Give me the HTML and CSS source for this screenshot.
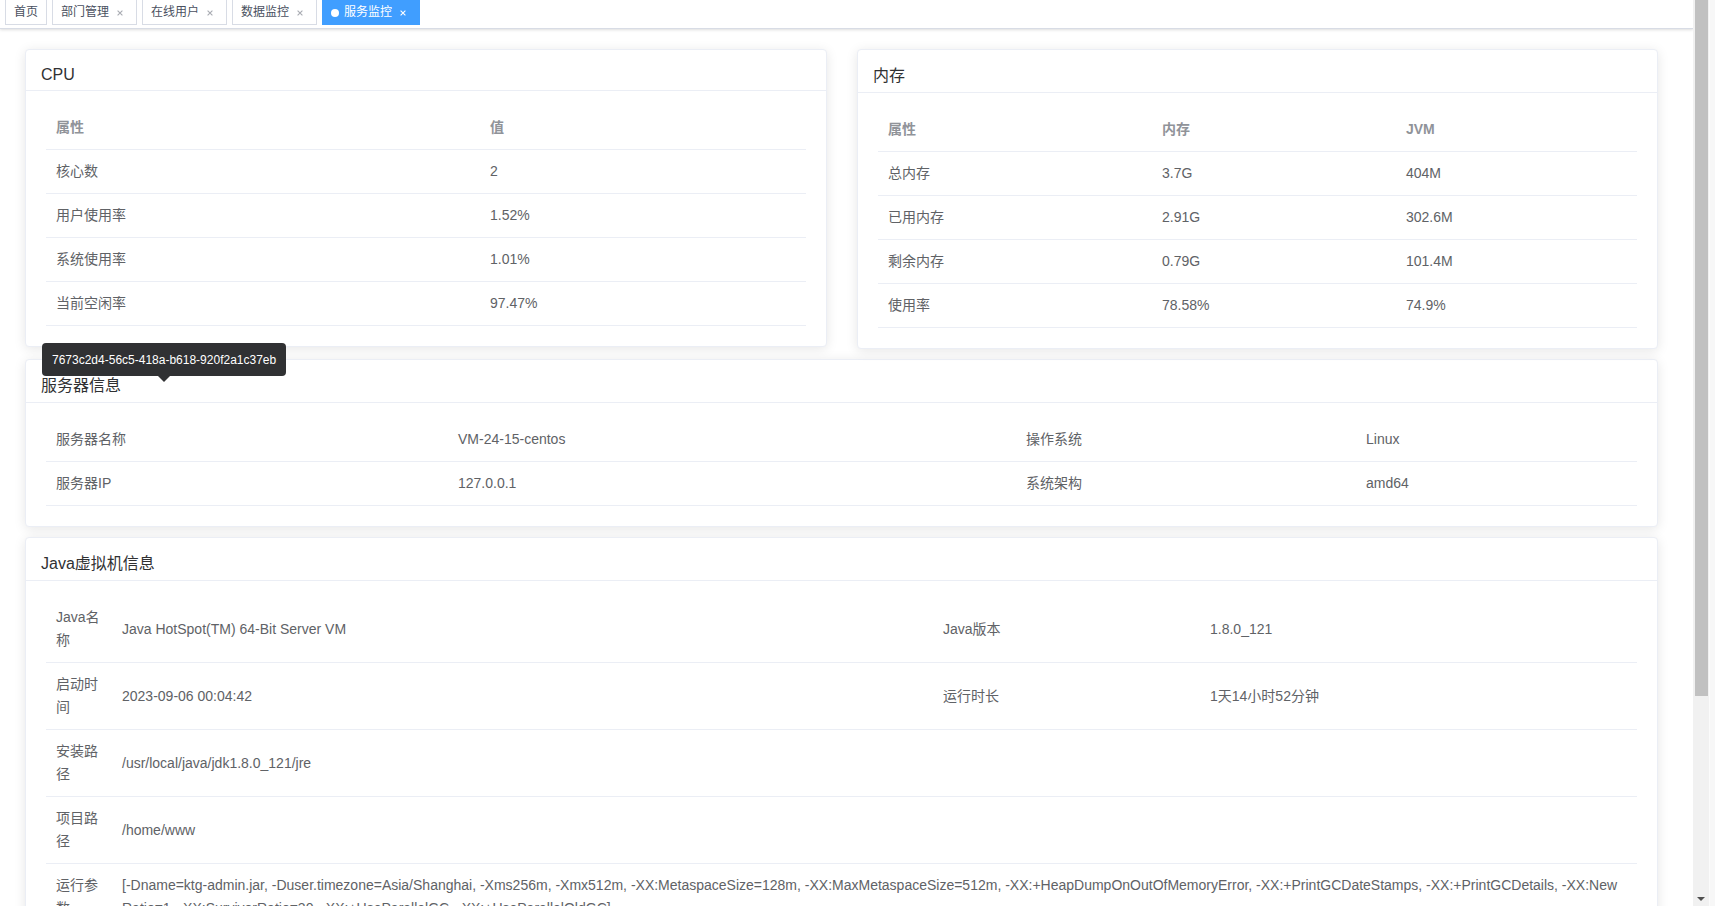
FILE: index.html
```html
<!DOCTYPE html>
<html lang="zh-CN">
<head>
<meta charset="utf-8">
<title>服务监控</title>
<link rel="stylesheet" href="styles.css">
</head>
<body>
<div class="window">
  <div class="page">
    <div class="tags-bar">
      <span class="tag">首页</span>
      <span class="tag">部门管理<i class="close"><svg viewBox="0 0 16 16" width="16" height="16"><path d="M5.6 5.6L10.4 10.4M10.4 5.6L5.6 10.4"/></svg></i></span>
      <span class="tag">在线用户<i class="close"><svg viewBox="0 0 16 16" width="16" height="16"><path d="M5.6 5.6L10.4 10.4M10.4 5.6L5.6 10.4"/></svg></i></span>
      <span class="tag">数据监控<i class="close"><svg viewBox="0 0 16 16" width="16" height="16"><path d="M5.6 5.6L10.4 10.4M10.4 5.6L5.6 10.4"/></svg></i></span>
      <span class="tag active"><i class="dot"></i>服务监控<i class="close"><svg viewBox="0 0 16 16" width="16" height="16"><path d="M5.6 5.6L10.4 10.4M10.4 5.6L5.6 10.4"/></svg></i></span>
    </div>

    <div class="content">
      <div class="row-2">
        <div class="card">
          <div class="card-header latin">CPU</div>
          <div class="card-body">
            <table class="tbl">
              <colgroup><col class="w434"><col class="w326"></colgroup>
              <thead><tr><th>属性</th><th>值</th></tr></thead>
              <tbody>
                <tr><td>核心数</td><td>2</td></tr>
                <tr><td>用户使用率</td><td>1.52%</td></tr>
                <tr><td>系统使用率</td><td>1.01%</td></tr>
                <tr><td>当前空闲率</td><td>97.47%</td></tr>
              </tbody>
            </table>
          </div>
        </div>
        <div class="card">
          <div class="card-header">内存</div>
          <div class="card-body">
            <table class="tbl">
              <colgroup><col class="w274"><col class="w244"><col class="w241"></colgroup>
              <thead><tr><th>属性</th><th>内存</th><th>JVM</th></tr></thead>
              <tbody>
                <tr><td>总内存</td><td>3.7G</td><td>404M</td></tr>
                <tr><td>已用内存</td><td>2.91G</td><td>302.6M</td></tr>
                <tr><td>剩余内存</td><td>0.79G</td><td>101.4M</td></tr>
                <tr><td>使用率</td><td>78.58%</td><td>74.9%</td></tr>
              </tbody>
            </table>
          </div>
        </div>
      </div>

      <div class="card">
        <div class="card-header">服务器信息</div>
        <div class="card-body">
          <table class="tbl">
            <colgroup><col class="w402"><col class="w568"><col class="w340"><col class="w281"></colgroup>
            <tbody>
              <tr><td>服务器名称</td><td>VM-24-15-centos</td><td>操作系统</td><td>Linux</td></tr>
              <tr><td>服务器IP</td><td>127.0.0.1</td><td>系统架构</td><td>amd64</td></tr>
            </tbody>
          </table>
        </div>
      </div>

      <div class="card">
        <div class="card-header">Java虚拟机信息</div>
        <div class="card-body">
          <table class="tbl">
            <colgroup><col class="w66"><col class="w821"><col class="w267"><col class="w437"></colgroup>
            <tbody>
              <tr><td>Java名称</td><td>Java HotSpot(TM) 64-Bit Server VM</td><td>Java版本</td><td>1.8.0_121</td></tr>
              <tr><td>启动时间</td><td>2023-09-06 00:04:42</td><td>运行时长</td><td>1天14小时52分钟</td></tr>
              <tr><td>安装路径</td><td colspan="3">/usr/local/java/jdk1.8.0_121/jre</td></tr>
              <tr><td>项目路径</td><td colspan="3">/home/www</td></tr>
              <tr><td>运行参数</td><td colspan="3">[-Dname=ktg-admin.jar, -Duser.timezone=Asia/Shanghai, -Xms256m, -Xmx512m, -XX:MetaspaceSize=128m, -XX:MaxMetaspaceSize=512m, -XX:+HeapDumpOnOutOfMemoryError, -XX:+PrintGCDateStamps, -XX:+PrintGCDetails, -XX:NewRatio=1, -XX:SurvivorRatio=30, -XX:+UseParallelGC, -XX:+UseParallelOldGC]</td></tr>
            </tbody>
          </table>
        </div>
      </div>
    </div>

    <div class="tooltip">7673c2d4-56c5-418a-b618-920f2a1c37eb</div>
  </div>

  <div class="scrollbar">
    <div class="thumb"></div>
    <div class="arrow-down"></div>
  </div>
  <div class="edge"></div>
</div>
</body>
</html>
```

FILE: styles.css
```css
html, body {
  margin: 0;
  padding: 0;
  height: 906px;
  overflow: hidden;
  background: #fff;
}

body {
  font-family: "Liberation Sans", "Noto Sans CJK SC", sans-serif;
  font-size: 14px;
  color: #606266;
}

.window {
  display: flex;
  height: 906px;
}

.page {
  position: relative;
  width: 1693px;
  flex: 0 0 1693px;
  height: 906px;
  overflow: hidden;
  background: #fff;
}

/* ---------- tags bar ---------- */
.tags-bar {
  height: 28px;
  background: #fff;
  border-bottom: 1px solid #d8dce5;
  box-shadow: 0 1px 3px 0 rgba(0, 0, 0, 0.12), 0 0 3px 0 rgba(0, 0, 0, 0.04);
  display: flex;
  align-items: flex-start;
  position: relative;
  z-index: 2;
}

.tag {
  display: inline-flex;
  align-items: center;
  box-sizing: border-box;
  height: 26px;
  margin-top: -1px;
  margin-left: 5px;
  padding: 1px 8px 0;
  border: 1px solid #d8dce5;
  background: #fff;
  color: #495060;
  font-size: 12px;
  line-height: 23px;
  white-space: nowrap;
}

.tag .close {
  display: inline-block;
  width: 16px;
  height: 16px;
  margin-left: 3px;
}

.tag .close svg {
  display: block;
}

.tag .close path {
  stroke: #a8abb2;
  stroke-width: 1.1;
  fill: none;
}

.tag.active {
  background: #409eff;
  border-color: #409eff;
  color: #fff;
}

.tag.active .close path {
  stroke: #fff;
}

.tag .dot {
  display: inline-block;
  width: 8px;
  height: 8px;
  border-radius: 50%;
  background: #fff;
  margin-right: 5px;
}

/* ---------- content ---------- */
.content {
  padding: 20px 35px 0 25px;
}

.row-2 {
  display: grid;
  grid-template-columns: 802px 801px;
  column-gap: 30px;
  align-items: start;
}

.card {
  background: #fff;
  border: 1px solid #ebeef5;
  border-radius: 4px;
  box-shadow: 0 2px 12px 0 rgba(0, 0, 0, 0.1);
  margin-bottom: 10px;
  overflow: hidden;
  color: #303133;
}

.card-header {
  padding: 14px 15px 5px;
  line-height: 23px;
  font-size: 16px;
  color: #303133;
  border-bottom: 1px solid #ebeef5;
}

.card-header.latin {
  line-height: 21px;
}

.card-body {
  padding: 15px 20px 20px;
}

/* ---------- tables ---------- */
.tbl {
  width: 100%;
  table-layout: fixed;
  border-collapse: separate;
  border-spacing: 0;
  font-size: 14px;
}

.tbl th,
.tbl td {
  padding: 10px;
  line-height: 23px;
  text-align: left;
  vertical-align: middle;
  border-bottom: 1px solid #ebeef5;
  word-break: break-all;
}

.tbl th {
  color: #909399;
  font-weight: bold;
}

.tbl td {
  color: #606266;
}

.w434 { width: 434px; }
.w326 { width: 326px; }
.w274 { width: 274px; }
.w244 { width: 244px; }
.w241 { width: 241px; }
.w402 { width: 402px; }
.w568 { width: 568px; }
.w340 { width: 340px; }
.w281 { width: 281px; }
.w66 { width: 66px; }
.w821 { width: 821px; }
.w267 { width: 267px; }
.w437 { width: 437px; }

/* ---------- tooltip ---------- */
.tooltip {
  position: absolute;
  left: 42px;
  top: 343px;
  z-index: 5;
  padding: 11px 10px 9px;
  background: #303133;
  color: #fff;
  border-radius: 4px;
  font-size: 12px;
  line-height: 1.1;
  white-space: nowrap;
}

.tooltip::after {
  content: "";
  position: absolute;
  left: 116px;
  bottom: -6px;
  width: 0;
  height: 0;
  border-left: 6px solid transparent;
  border-right: 6px solid transparent;
  border-top: 6px solid #303133;
}

/* ---------- fake scrollbar ---------- */
.scrollbar {
  position: relative;
  flex: 0 0 16px;
  width: 16px;
  height: 906px;
  background: #f1f1f1;
}

.thumb {
  width: 13px;
  height: 696px;
  margin-left: 2px;
  background: #c1c1c1;
}

.arrow-down {
  position: absolute;
  left: 4px;
  bottom: 5px;
  width: 0;
  height: 0;
  border-left: 4px solid transparent;
  border-right: 4px solid transparent;
  border-top: 4px solid #505050;
}

.edge {
  flex: 1 1 auto;
  height: 906px;
  background: #f7f7f7;
  border-left: 1px solid #fbfbfb;
}
```
